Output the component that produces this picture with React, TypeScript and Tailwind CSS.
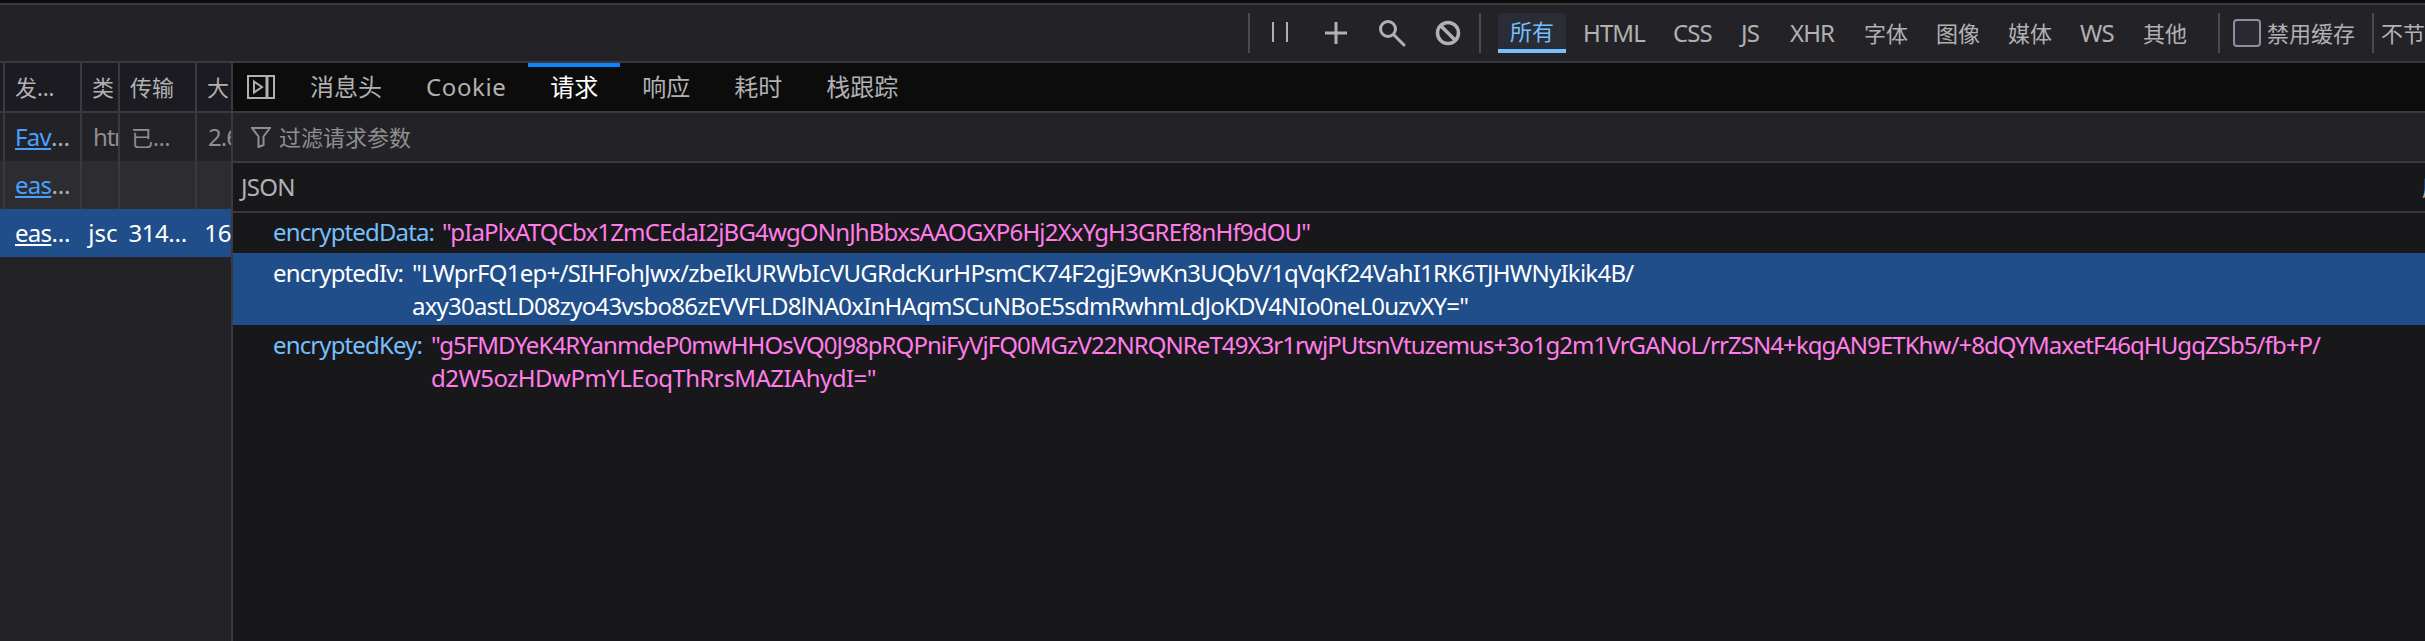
import React from "react";

const FONT = "font-['Noto_Sans','Noto_Sans_CJK_SC',sans-serif]";

// widths are the distance to the next label in the bar
const FILTERS = [
  { label: "HTML", w: "w-[90px]", latin: true },
  { label: "CSS", w: "w-[68px]", latin: true },
  { label: "JS", w: "w-[49px]", latin: true },
  { label: "XHR", w: "w-[74px]", latin: true },
  { label: "字体", w: "w-[72px]" },
  { label: "图像", w: "w-[72px]" },
  { label: "媒体", w: "w-[72px]" },
  { label: "WS", w: "w-[63px]", latin: true },
  { label: "其他", w: "w-[75px]" },
];

function Sep() {
  return <div className="w-[2px] h-[40px] bg-[#4a4a4f] shrink-0" />;
}

function TopBar() {
  return (
    <div className="h-[63px] bg-[#0c0c0d] pt-[3px] shrink-0">
      <div className="h-[60px] bg-[#232327] border-y-2 border-[#3a3a3e] flex items-center pl-[1248px] overflow-hidden whitespace-nowrap text-[22px] text-[#b1b1b3]">
        <Sep />
        <svg width="229" height="40" viewBox="0 0 229 40" className="shrink-0" fill="none" stroke="#b1b1b3">
          <path d="M23 9v20M37 9v20" strokeWidth="2" />
          <path d="M75 20h22M86 9v22" strokeWidth="3" />
          <circle cx="138" cy="16" r="7.5" strokeWidth="3" />
          <path d="M144 22l10 10" strokeWidth="3" strokeLinecap="round" />
          <circle cx="198" cy="20" r="10.500" strokeWidth="3.5" />
          <path d="M191 13l14 14" strokeWidth="3.5" />
        </svg>
        <Sep />
        <div className="ml-[17px] w-[68px] h-[40px] shrink-0 rounded-t-[4px] bg-[#2a2d35] border-b-4 border-[#75bfff] text-[#75bfff] flex items-center justify-center text-[22px]">
          所有
        </div>
        <div className="w-[17px] shrink-0" />
        {FILTERS.map((f) => (
          <div key={f.label} className={f.latin ? `${f.w} shrink-0 text-[24px] tracking-[-0.9px]` : `${f.w} shrink-0`}>
            {f.label}
          </div>
        ))}
        <Sep />
        <div className="ml-[13px] w-[28px] h-[28px] shrink-0 rounded-[4px] border-2 border-[#8f8f9d] bg-[#2b2a33]" />
        <div className="ml-[6px] w-[89px] shrink-0">禁用缓存</div>
        <div className="ml-[16px]"><Sep /></div>
        <div className="ml-[7px]">不节流</div>
      </div>
    </div>
  );
}

function Cell({ w, children, cls = "" }: { w: string; children?: React.ReactNode; cls?: string }) {
  return (
    <div className={`${w} h-full shrink-0 border-r-2 border-[#3a3a3e] overflow-hidden whitespace-nowrap flex items-center ${cls}`}>
      {children}
    </div>
  );
}

function Link({ text, selected }: { text: string; selected?: boolean }) {
  return (
    <span className={`${selected ? "pl-[15px]" : "pl-[10px]"} flex text-[24px] tracking-[-0.7px]`}>
      <span className={selected ? "underline text-white" : "underline text-[#45a1ff]"}>{text}</span>
      <span className={selected ? "text-white" : "text-[#b1b1b3]"}>…</span>
    </span>
  );
}

function RequestList() {
  return (
    <div className="w-[233px] shrink-0 bg-[#232327] border-r-2 border-[#3a3a3e] text-[22px] text-[#b1b1b3]">
      <div className="h-[50px] flex bg-[#1c1b22] border-b-2 border-[#3a3a3e]">
        <Cell w="w-[5px]" />
        <Cell w="w-[77px]" cls="pl-[10px]"><span>发…</span></Cell>
        <Cell w="w-[38px]" cls="pl-[10px]">类</Cell>
        <Cell w="w-[77px]" cls="pl-[10px]">传输</Cell>
        <div className="pl-[10px] flex items-center">大</div>
      </div>
      <div className="h-[48px] flex">
        <Cell w="w-[5px]" />
        <Cell w="w-[77px]"><Link text="Fav" /></Cell>
        <Cell w="w-[38px]" cls="pl-[11px] text-[#8f8f8f] text-[24px] tracking-[-1.2px]">html</Cell>
        <Cell w="w-[77px]" cls="pl-[11px] text-[#8f8f8f]">已…</Cell>
        <div className="pl-[11px] flex items-center text-[#8f8f8f] overflow-hidden text-[24px] tracking-[-1px] whitespace-nowrap">2.6</div>
      </div>
      <div className="h-[48px] flex bg-[#2d2d31]">
        <Cell w="w-[5px]" />
        <Cell w="w-[77px]"><Link text="eas" /></Cell>
        <Cell w="w-[38px]" />
        <Cell w="w-[77px]" />
      </div>
      <div className="h-[48px] flex bg-[#204e8a] text-white text-[24px]">
        <div className="w-[82px] flex items-center"><Link text="eas" selected /></div>
        <div className="w-[38px] pl-[8px] flex items-center overflow-hidden">jsc</div>
        <div className="w-[77px] pl-[11px] flex items-center tracking-[-0.5px]">314…</div>
        <div className="pl-[11px] flex items-center overflow-hidden">16</div>
      </div>
    </div>
  );
}

function Tabs() {
  const tabs = ["消息头", "Cookie", "请求", "响应", "耗时", "栈跟踪"];
  return (
    <div className="h-[50px] bg-[#0c0c0d] border-b-2 border-[#3a3a3e] flex text-[24px] text-[#b1b1b3] shrink-0">
      <div className="w-[55px] pl-[14px] flex items-center shrink-0">
        <svg width="28" height="24" viewBox="0 0 28 24" fill="none" stroke="#b1b1b3" strokeWidth="2">
          <rect x="1" y="1" width="26" height="22" />
          <path d="M20 1v22" strokeWidth="3" />
          <path d="M7 6.500l8 5.500-8 5.500z" />
        </svg>
      </div>
      {tabs.map((t) => (
        <div
          key={t}
          className={
            t === "请求"
              ? "px-[22px] h-[48px] flex items-center border-t-4 border-[#0a84ff] text-white pb-[4px]"
              : t === "Cookie"
                ? "px-[22px] h-[48px] flex items-center pb-[1px] tracking-[0.6px]"
                : "px-[22px] h-[48px] flex items-center pb-[1px]"
          }
        >
          {t}
        </div>
      ))}
    </div>
  );
}

type Line = { text: string; track: string };

function Param({ name, lines, selected, indent, cls = "py-[3px]" }: { name: string; lines: Line[]; selected?: boolean; indent: string; cls?: string }) {
  return (
    <div className={selected ? `bg-[#204e8a] text-white pl-[40px] leading-[33px] ${cls}` : `pl-[40px] leading-[33px] ${cls}`}>
      <div className="flex whitespace-nowrap text-[24px] tracking-[-0.87px]">
        <span className={`${indent} shrink-0 ${selected ? "" : "text-[#75bfff]"}`}>{name}</span>
        <div className={selected ? "" : "text-[#ff7de9]"}>
          {lines.map((l) => (
            <div key={l.text} className={l.track}>{l.text}</div>
          ))}
        </div>
      </div>
    </div>
  );
}

function Detail() {
  return (
    <div className="flex-1 flex flex-col min-w-0 overflow-hidden bg-[#18181b] text-[22px]">
      <Tabs />
      <div className="h-[50px] bg-[#232327] border-b-2 border-[#3a3a3e] flex items-center pl-[18px] text-[#8f8f8f] shrink-0">
        <svg width="20" height="22" viewBox="0 0 20 22" fill="none" stroke="#8f8f8f" strokeWidth="2" className="mr-[8px]">
          <path d="M1 2h18l-6.500 8.500V19l-5 2V10.500z" />
        </svg>
        过滤请求参数
      </div>
      <div className="h-[50px] border-b-2 border-[#3a3a3e] flex items-center justify-between pl-[8px] text-[#b1b1b3] shrink-0 whitespace-nowrap">
        <span className="text-[24px] tracking-[-0.7px]">JSON</span>
        <span className="-mr-[41px]">原始</span>
      </div>
      <div className="pt-[1px]">
        <Param
          name="encryptedData:"
          indent="w-[169px]"
          cls="pt-[1px] pb-[5px]"
          lines={[{ text: '"pIaPlxATQCbx1ZmCEdaI2jBG4wgONnJhBbxsAAOGXP6Hj2XxYgH3GREf8nHf9dOU"', track: "tracking-[-0.84px]" }]}
        />
        <Param
          selected
          name="encryptedIv:"
          indent="w-[139px]"
          lines={[
            { text: '"LWprFQ1ep+/SIHFohJwx/zbeIkURWbIcVUGRdcKurHPsmCK74F2gjE9wKn3UQbV/1qVqKf24VahI1RK6TJHWNyIkik4B/', track: "tracking-[-0.74px]" },
            { text: 'axy30astLD08zyo43vsbo86zEVVFLD8lNA0xInHAqmSCuNBoE5sdmRwhmLdJoKDV4NIo0neL0uzvXY="', track: "tracking-[-0.77px]" },
          ]}
        />
        <Param
          name="encryptedKey:"
          indent="w-[158px]"
          lines={[
            { text: '"g5FMDYeK4RYanmdeP0mwHHOsVQ0J98pRQPniFyVjFQ0MGzV22NRQNReT49X3r1rwjPUtsnVtuzemus+3o1g2m1VrGANoL/rrZSN4+kqgAN9ETKhw/+8dQYMaxetF46qHUgqZSb5/fb+P/', track: "tracking-[-0.94px]" },
            { text: 'd2W5ozHDwPmYLEoqThRrsMAZIAhydI="', track: "tracking-[-0.54px]" },
          ]}
        />
      </div>
    </div>
  );
}

export default function App() {
  return (
    <div className={`w-[2425px] h-[641px] flex flex-col overflow-hidden bg-[#232327] ${FONT}`}>
      <TopBar />
      <div className="flex-1 flex min-h-0">
        <RequestList />
        <Detail />
      </div>
    </div>
  );
}
